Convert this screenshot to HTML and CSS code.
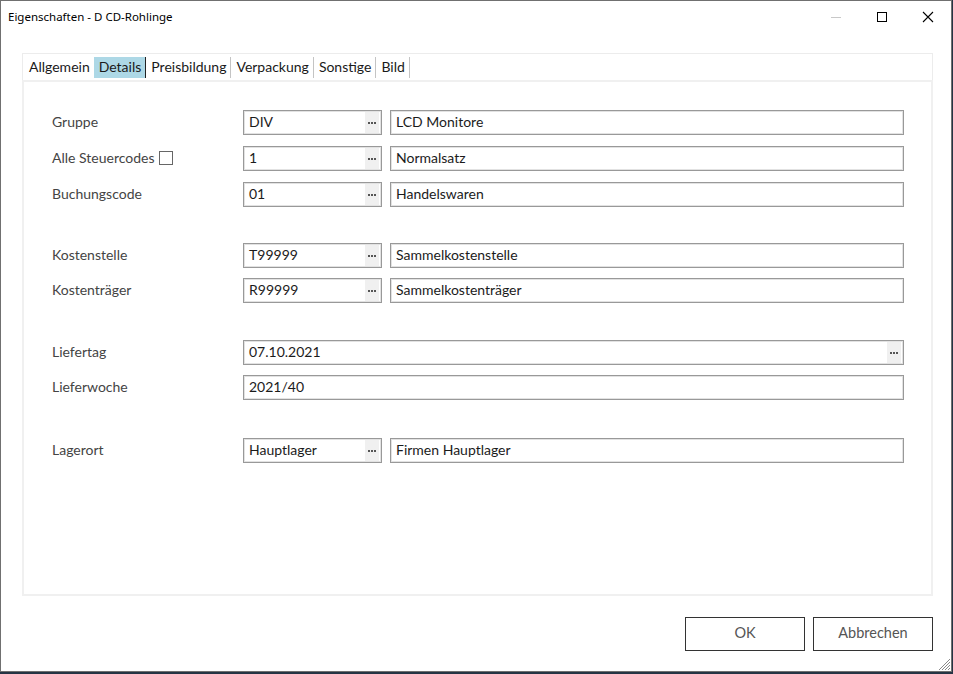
FILE: index.html
```html
<!DOCTYPE html>
<html lang="de">
<head>
<meta charset="utf-8">
<title>Eigenschaften - D CD-Rohlinge</title>
<link rel="stylesheet" href="styles.css">
</head>
<body>
<div class="window">
  <div class="titlebar">
    <span class="title">Eigenschaften - D CD-Rohlinge</span>
    <div class="controls">
      <span class="ctl"><svg width="12" height="12" viewBox="0 0 12 12"><line x1="1" y1="6.5" x2="11" y2="6.5" stroke="#c8c8c8" stroke-width="1"/></svg></span>
      <span class="ctl"><svg width="12" height="12" viewBox="0 0 12 12"><rect x="1.5" y="1.5" width="9" height="9" fill="none" stroke="#000" stroke-width="1"/></svg></span>
      <span class="ctl"><svg width="12" height="12" viewBox="0 0 12 12"><path d="M1 1 L11 11 M11 1 L1 11" stroke="#000" stroke-width="1.1"/></svg></span>
    </div>
  </div>
  <div class="body">
    <div class="tabstrip">
      <span class="tab">Allgemein</span>
      <span class="tab active">Details</span>
      <span class="tab sep">Preisbildung</span>
      <span class="tab sep">Verpackung</span>
      <span class="tab sep">Sonstige</span>
      <span class="tab sep">Bild</span>
    </div>
    <div class="page">
      <div class="group g1">
        <div class="row">
          <span class="label">Gruppe</span>
          <div class="box code"><span class="val">DIV</span><span class="dots"><i></i><i></i><i></i></span></div>
          <div class="box desc"><span class="val">LCD Monitore</span></div>
        </div>
        <div class="row">
          <span class="label">Alle Steuercodes <span class="check"></span></span>
          <div class="box code"><span class="val">1</span><span class="dots"><i></i><i></i><i></i></span></div>
          <div class="box desc"><span class="val">Normalsatz</span></div>
        </div>
        <div class="row">
          <span class="label">Buchungscode</span>
          <div class="box code"><span class="val">01</span><span class="dots"><i></i><i></i><i></i></span></div>
          <div class="box desc"><span class="val">Handelswaren</span></div>
        </div>
      </div>
      <div class="group">
        <div class="row">
          <span class="label">Kostenstelle</span>
          <div class="box code"><span class="val">T99999</span><span class="dots"><i></i><i></i><i></i></span></div>
          <div class="box desc"><span class="val">Sammelkostenstelle</span></div>
        </div>
        <div class="row">
          <span class="label">Kostenträger</span>
          <div class="box code"><span class="val">R99999</span><span class="dots"><i></i><i></i><i></i></span></div>
          <div class="box desc"><span class="val">Sammelkostenträger</span></div>
        </div>
      </div>
      <div class="group g3">
        <div class="row">
          <span class="label">Liefertag</span>
          <div class="box wide"><span class="val">07.10.2021</span><span class="dots"><i></i><i></i><i></i></span></div>
        </div>
        <div class="row">
          <span class="label">Lieferwoche</span>
          <div class="box wide"><span class="val">2021/40</span></div>
        </div>
      </div>
      <div class="group g4">
        <div class="row">
          <span class="label">Lagerort</span>
          <div class="box code"><span class="val">Hauptlager</span><span class="dots"><i></i><i></i><i></i></span></div>
          <div class="box desc"><span class="val">Firmen Hauptlager</span></div>
        </div>
      </div>
    </div>
    <div class="buttons">
      <button class="btn">OK</button>
      <button class="btn">Abbrechen</button>
    </div>
  </div>
  <svg class="grip" width="14" height="14" viewBox="0 0 14 14">
    <path d="M13 2 L2 13 M13 5 L5 13 M13 8 L8 13 M13 11 L11 13" stroke="#8a8a8a" stroke-width="1"/>
  </svg>
</div>
</body>
</html>
```

FILE: styles.css
```css
* { box-sizing: border-box; }
html, body { margin: 0; padding: 0; }
body {
  background: #253444;
  width: 953px;
  height: 674px;
  overflow: hidden;
  font-family: "Lato", "Noto Sans", sans-serif;
}
.window {
  position: relative;
  width: 952px;
  height: 672px;
  background: #fff;
  border: 1px solid #707070;
  display: flex;
  flex-direction: column;
}
.titlebar {
  height: 31px;
  display: flex;
  align-items: center;
  justify-content: space-between;
  padding-left: 7px;
}
.title {
  font-family: "Noto Sans", sans-serif;
  font-size: 11.5px;
  color: #000;
  margin-top: -1px;
}
.controls { display: flex; height: 31px; align-self: flex-start; }
.ctl {
  width: 46px;
  height: 31px;
  display: flex;
  align-items: center;
  justify-content: center;
}
.body {
  flex: 1;
  padding: 21px 18px 0 21px;
  display: flex;
  flex-direction: column;
}
.tabstrip {
  height: 27px;
  border: 1px solid #ececec;
  border-bottom: none;
  display: flex;
  align-items: center;
  padding-left: 2px;
  padding-top: 1px;
  font-size: 14px;
  color: #1a1a1a;
}
.tab {
  height: 21px;
  line-height: 20px;
  padding: 0 4px;
}
.tab.active {
  background: #add8e6;
  border-right: 1px solid #222;
  padding: 0 4px 0 5px;
}
.tab.sep { border-right: 1px solid #c4c4c4; padding: 0 4px 0 5px; }
.page {
  height: 516px;
  border: 2px solid #f0f0f0;
  padding: 28px 26px 0 28px;
  display: flex;
  flex-direction: column;
  gap: 36px;
}
.group { display: flex; flex-direction: column; gap: 10px; }
.group.g1 { gap: 11px; }
.group.g3 { margin-top: 1px; }
.group.g4 { margin-top: 2px; }
.row {
  display: flex;
  align-items: center;
  height: 25px;
}
.label {
  width: 191px;
  font-size: 14px;
  color: #444;
  display: flex;
  align-items: center;
  margin-top: -3px;
}
.check {
  display: inline-block;
  width: 14px;
  height: 14px;
  border: 1px solid #666;
  margin-left: 4px;
  margin-top: 1px;
}
.box {
  height: 25px;
  border: 1px solid #999;
  box-shadow: inset 0 0 0 1px #e2e2e2;
  display: flex;
  align-items: center;
  justify-content: space-between;
  padding: 2px 2px 2px 5px;
  font-size: 14px;
  color: #1b1b1b;
}
.box.code { width: 139px; margin-right: 8px; }
.box.desc { width: 514px; }
.box.wide { width: 661px; }
.val { margin-top: -2px; }
.dots {
  width: 14px;
  height: 21px;
  background: #f0f0f0;
  display: flex;
  justify-content: center;
  align-items: center;
  gap: 1px;
  padding-top: 1px;
}
.dots i {
  display: block;
  width: 2px;
  height: 2px;
  background: #555;
}
.buttons {
  display: flex;
  justify-content: flex-end;
  gap: 8px;
  padding-top: 21px;
}
.btn {
  width: 120px;
  height: 34px;
  background: #fff;
  border: 1px solid #333;
  font-family: "Lato", "Noto Sans", sans-serif;
  font-size: 14.5px;
  color: #555;
  padding: 0 0 4px 0;
}
.grip {
  position: absolute;
  right: 0;
  bottom: 0;
}
```
